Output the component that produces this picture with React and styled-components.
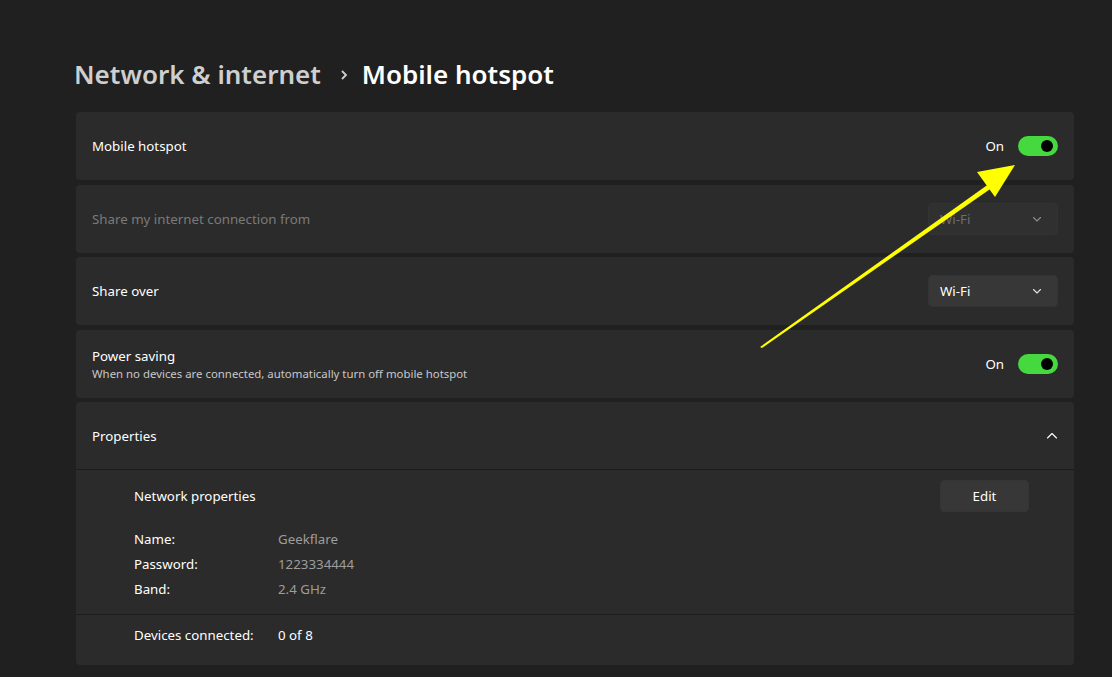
import React from 'react';
import styled, {createGlobalStyle} from 'styled-components';

const Global = createGlobalStyle`
  html, body {
    margin: 0;
    background: #202020;
  }
  body {
    font-family: "Segoe UI", "Noto Sans", "Open Sans", sans-serif;
    color: #ffffff;
  }
`;

const Page = styled.div`
  position: relative;
  width: 1112px;
  height: 677px;
  overflow: hidden;
  background: #202020;
  padding: 56px 38px 0 76px;
  box-sizing: border-box;
`;

const Breadcrumb = styled.h1`
  display: flex;
  align-items: center;
  margin: 0 0 19px -2px;
  font-size: 26px;
  font-weight: 600;
  line-height: 37px;
  .parent {
    color: #cfcfcf;
  }
  .sep {
    display: inline-flex;
    margin: 0 13px 0 18px;
  }
  .current {
    color: #ffffff;
  }
`;

const List = styled.div`
  display: flex;
  flex-direction: column;
  gap: 4.5px;
`;

const Card = styled.div`
  background: #2b2b2b;
  border-radius: 4px;
  overflow: hidden;
`;

const Row = styled.div`
  display: flex;
  align-items: center;
  justify-content: space-between;
  height: 68px;
  padding: 0 16px;
  box-sizing: border-box;
  border-bottom: ${p => (p.divided ? '1px solid #1c1c1c' : 'none')};
`;

const Label = styled.div`
  font-size: 13.3px;
  color: ${p => (p.disabled ? '#7a7a7a' : '#ffffff')};
  .sub {
    display: block;
    font-size: 11.4px;
    color: #c8c8c8;
    margin-top: 1px;
  }
`;

const Control = styled.div`
  display: flex;
  align-items: center;
  gap: 14px;
  font-size: 13.3px;
`;

const Toggle = styled.div`
  width: 40px;
  height: 20px;
  border-radius: 10px;
  background: #45d83f;
  display: flex;
  align-items: center;
  justify-content: flex-end;
  padding: 0 5px;
  box-sizing: border-box;
  &::after {
    content: '';
    width: 12px;
    height: 12px;
    border-radius: 50%;
    background: #000;
  }
`;

const Select = styled.div`
  width: 130px;
  height: 32px;
  box-sizing: border-box;
  border-radius: 4px;
  border: 1px solid #333333;
  background: ${p => (p.disabled ? '#303030' : '#373737')};
  color: ${p => (p.disabled ? '#6e6e6e' : '#ffffff')};
  display: flex;
  align-items: center;
  justify-content: space-between;
  padding: 0 14px 0 11px;
  font-size: 13.3px;
  svg {
    opacity: ${p => (p.disabled ? 0.45 : 0.85)};
  }
`;

const Body = styled.div`
  padding: 0 45px 0 58px;
`;

const BodyHead = styled.div`
  display: flex;
  align-items: center;
  justify-content: space-between;
  padding-top: 10px;
  font-size: 13.3px;
`;

const Button = styled.button`
  width: 89px;
  height: 32px;
  border: 1px solid #353535;
  border-radius: 4px;
  background: #373737;
  color: #ffffff;
  font-family: inherit;
  font-size: 13.3px;
`;

const Props = styled.div`
  display: grid;
  grid-template-columns: 144px 1fr;
  row-gap: 6px;
  padding: 18px 0 15px;
  font-size: 13.3px;
  line-height: 19px;
  .key {
    color: #ffffff;
  }
  .val {
    color: #9d9d9d;
  }
`;

const Footer = styled.div`
  display: grid;
  grid-template-columns: 144px 1fr;
  border-top: 1px solid #1c1c1c;
  padding: 11px 0 20px 58px;
  font-size: 13.3px;
  line-height: 19px;
`;

const Overlay = styled.svg`
  position: absolute;
  left: 0;
  top: 0;
  pointer-events: none;
`;

const Chevron = ({up}) => (
  <svg width="12" height="12" viewBox="0 0 12 12">
    <path
      d={up ? 'M1.5 8 L6 3.5 L10.5 8' : 'M2.5 4.5 L6 8 L9.5 4.5'}
      fill="none"
      stroke="#ffffff"
      strokeWidth="1.1"
      strokeLinecap="round"
      strokeLinejoin="round"
    />
  </svg>
);

export default function App() {
  return (
    <Page>
      <Global />
      <Breadcrumb>
        <span className="parent">Network &amp; internet</span>
        <span className="sep">
          <svg width="10" height="14" viewBox="0 0 10 14">
            <path d="M3 3 L7 7 L3 11" fill="none" stroke="#d0d0d0" strokeWidth="1.8" />
          </svg>
        </span>
        <span className="current">Mobile hotspot</span>
      </Breadcrumb>

      <List>
        <Card>
          <Row>
            <Label>Mobile hotspot</Label>
            <Control>
              On
              <Toggle />
            </Control>
          </Row>
        </Card>
        <Card>
          <Row>
            <Label disabled>Share my internet connection from</Label>
            <Select disabled>
              Wi-Fi
              <Chevron />
            </Select>
          </Row>
        </Card>
        <Card>
          <Row>
            <Label>Share over</Label>
            <Select>
              Wi-Fi
              <Chevron />
            </Select>
          </Row>
        </Card>
        <Card>
          <Row>
            <Label>
              Power saving
              <span className="sub">When no devices are connected, automatically turn off mobile hotspot</span>
            </Label>
            <Control>
              On
              <Toggle />
            </Control>
          </Row>
        </Card>
        <Card>
          <Row divided>
            <Label>Properties</Label>
            <Chevron up />
          </Row>
          <Body>
            <BodyHead>
              Network properties
              <Button>Edit</Button>
            </BodyHead>
            <Props>
              <span className="key">Name:</span>
              <span className="val">Geekflare</span>
              <span className="key">Password:</span>
              <span className="val">1223334444</span>
              <span className="key">Band:</span>
              <span className="val">2.4 GHz</span>
            </Props>
          </Body>
          <Footer>
            <span>Devices connected:</span>
            <span>0 of 8</span>
          </Footer>
        </Card>
      </List>

      <Overlay width="1112" height="677" viewBox="0 0 1112 677">
        <path d="M760 347 L993 181 L996 185 L762 348 Z" fill="#ffff00" />
        <path d="M1015 165 L977 172 L995 197 Z" fill="#ffff00" />
      </Overlay>
    </Page>
  );
}
